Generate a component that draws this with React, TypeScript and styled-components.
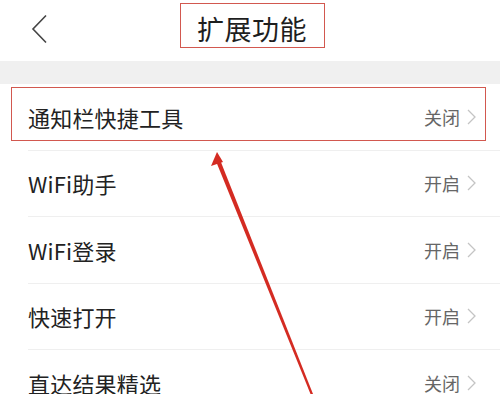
import React from "react";
import styled, { createGlobalStyle } from "styled-components";

const Global = createGlobalStyle`
  html, body { margin: 0; padding: 0; background: #fff; }
  body { font-family: "Noto Sans CJK SC", "Noto Sans", sans-serif; overflow: hidden; }
`;

const Page = styled.div`
  position: relative;
  width: 500px;
  height: 394px;
  overflow: hidden;
  background: #fff;
`;

const Header = styled.header`
  height: 61px;
  display: flex;
  align-items: center;
  justify-content: center;
  position: relative;
`;

const Back = styled.button`
  position: absolute;
  left: 28px;
  top: 12px;
  width: 22px;
  height: 34px;
  border: 0;
  background: none;
  padding: 0;
  display: flex;
  align-items: center;
  justify-content: center;
`;

const Title = styled.h1`
  margin: 0 0 0 4px;
  margin-top: -11px;
  width: 145px;
  height: 45px;
  box-sizing: border-box;
  border: 1.5px solid #d2584f;
  display: flex;
  align-items: center;
  justify-content: center;
  font-size: 27px;
  font-weight: 400;
  color: #1e1e1e;
  letter-spacing: 0.5px;
  padding-top: 6px;
`;

const Band = styled.div`
  height: 23px;
  background: #f0f0f0;
`;

const List = styled.ul`
  list-style: none;
  margin: 0;
  padding: 0;
`;

const Row = styled.li<{ $last?: boolean }>`
  height: 66.5px;
  margin-left: 28px;
  padding-right: 24px;
  display: flex;
  align-items: center;
  justify-content: space-between;
  border-bottom: ${(p) => (p.$last ? "none" : "1px solid #efefef")};
  box-sizing: border-box;
`;

const Label = styled.span`
  font-size: 22px;
  color: #222;
  letter-spacing: 0.2px;
`;

const Status = styled.span`
  display: flex;
  align-items: center;
  gap: 7px;
  font-size: 18px;
  color: #666;
`;

const Highlight = styled.div`
  position: absolute;
  left: 11px;
  top: 87px;
  width: 475px;
  height: 54px;
  box-sizing: border-box;
  border: 1.5px solid #d2584f;
  pointer-events: none;
`;

const Arrow = styled.svg`
  position: absolute;
  left: 0;
  top: 0;
  pointer-events: none;
`;

const Chevron = () => (
  <svg width="9" height="16" viewBox="0 0 9 16">
    <path d="M1 1 L8 8 L1 15" fill="none" stroke="#c4c4c4" strokeWidth="1.3" />
  </svg>
);

const rows = [
  { label: "通知栏快捷工具", status: "关闭" },
  { label: "WiFi助手", status: "开启" },
  { label: "WiFi登录", status: "开启" },
  { label: "快速打开", status: "开启" },
  { label: "直达结果精选", status: "关闭" },
];

export default function App() {
  return (
    <>
      <Global />
      <Page>
        <Header>
          <Back aria-label="返回">
            <svg width="18" height="30" viewBox="0 0 18 30">
              <path d="M16 1.5 L3 15 L16 28.5" fill="none" stroke="#444" strokeWidth="1.6" />
            </svg>
          </Back>
          <Title>扩展功能</Title>
        </Header>
        <Band />
        <List>
          {rows.map((r, i) => (
            <Row key={r.label} $last={i === rows.length - 1}>
              <Label>{r.label}</Label>
              <Status>
                {r.status}
                <Chevron />
              </Status>
            </Row>
          ))}
        </List>
        <Highlight />
        <Arrow width="500" height="394" viewBox="0 0 500 394">
          <polygon points="215.5,160 219.5,158.5 313,394 310.5,394" fill="#d42b22" />
          <polygon points="217,152 211,166 223,162" fill="#d42b22" />
        </Arrow>
      </Page>
    </>
  );
}
